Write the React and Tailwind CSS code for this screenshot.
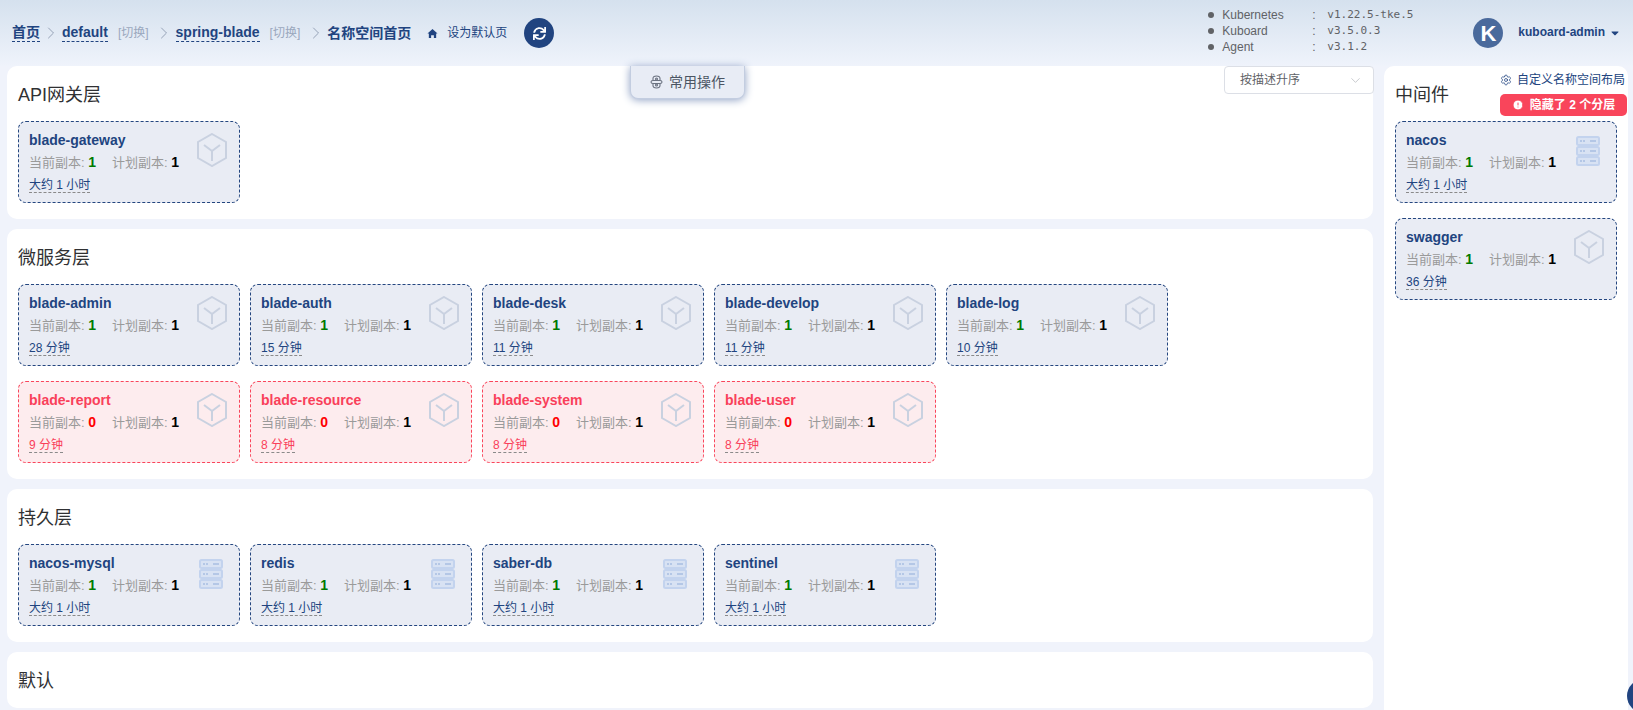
import React from 'react';
import { ChevronRight, ChevronDown, CircleAlert, Settings } from 'lucide-react';
import { FaSync, FaCaretDown } from 'react-icons/fa';

const FONT = "font-['Liberation_Sans','Noto_Sans_CJK_SC',sans-serif]";

const CubeIcon = () => (
  <svg width="30" height="34" viewBox="0 0 30 34" fill="none" stroke="#c9d1e0" strokeWidth="2" className="mt-[11px] shrink-0">
    <path d="M15 1 29 9v16l-14 8-14-8V9z" />
    <path d="M7 12l8 6 8-6M15 18v10" />
  </svg>
);

const ServerIcon = () => (
  <svg width="24" height="30" viewBox="0 0 24 30" className="mt-[14px] mr-[4px] shrink-0">
    {[0, 10, 20].map((y) => (
      <g key={y}>
        <rect x="1" y={y + 1} width="22" height="8" rx="1.5" fill="#d8e2f3" stroke="#c3d3ee" strokeWidth="2" />
        <rect x="14" y={y + 4} width="6" height="2" fill="#b4c7e6" />
        <rect x="4" y={y + 4} width="2" height="2" fill="#b4c7e6" />
        <rect x="7" y={y + 4} width="2" height="2" fill="#b4c7e6" />
      </g>
    ))}
  </svg>
);

const OpsIcon = () => (
  <svg width="13" height="14" viewBox="0 0 13 14" fill="none" stroke="#6b7280" strokeWidth="1.1">
    <path d="M3 5.5V3.5C3 2 4.5 1 6.500 1S10 2 10 3.500V5.500" />
    <path d="M3 8.500V10.500C3 12 4.500 13 6.500 13S10 12 10 10.500V8.500" />
    <path d="M1 7c0-1 1-1.500 2-1.500h7c1 0 2 .5 2 1.500s-1 1.500-2 1.500H3C2 8.500 1 8 1 7z" />
    <circle cx="6.500" cy="4" r="1" />
    <circle cx="6.500" cy="10" r="1" />
  </svg>
);

const HomeIcon = () => (
  <svg width="11" height="11" viewBox="0 0 12 12" fill="#214480" className="ml-[16px] shrink-0">
    <path d="M6 1 11.500 6H10v5H7.500V8h-3v3H2V6H.5z" />
  </svg>
);

const WorkloadCard = ({ name, current = 1, time, icon = 'cube', failed }) => (
  <div
    className={`flex justify-between w-[222px] h-[82px] rounded-[8px] border border-dashed pl-[10px] pr-[12px] ${
      failed ? 'bg-[#fdecee] border-[#f9455b]' : 'bg-[#e9ecf4] border-[#24467f]'
    }`}
  >
    <div className="min-w-0">
      <div className={`mt-[9px] h-[18px] leading-[18px] text-[14px] font-bold ${failed ? 'text-[#f9405a]' : 'text-[#214480]'}`}>
        {name}
      </div>
      <div className="mt-[3px] h-[20px] leading-[20px] text-[13px] text-[#9a9a9a] whitespace-nowrap">
        当前副本:{' '}
        <span className={`font-bold text-[14px] ${current === 0 ? 'text-[#ff0000]' : 'text-[#007a00]'}`}>{current}</span>
        <span className="ml-[16px]">计划副本: </span>
        <span className="font-bold text-[14px] text-black">1</span>
      </div>
      <div className="mt-[3px] flex">
        <span
          className={`h-[18px] leading-[20px] text-[12px] border-b border-dashed border-[#8a8a8a] ${
            failed ? 'text-[#f9405a]' : 'text-[#214480]'
          }`}
        >
          {time}
        </span>
      </div>
    </div>
    {icon === 'cube' ? <CubeIcon /> : <ServerIcon />}
  </div>
);

const Crumb = ({ children }) => (
  <span className="font-bold text-[14px] text-[#214480] border-b border-dashed border-[#214480] leading-[17px]">{children}</span>
);

const Switch = () => <span className="ml-[10px] text-[12px] text-[#9aa7bd]">[切换]</span>;

const Sep = ({ className }) => <ChevronRight size={20} strokeWidth={1.1} className={`text-[#8d9ab0] shrink-0 ${className}`} />;

const Panel = ({ title, children }) => (
  <div className="bg-white rounded-[10px] pl-[11px] pb-[16px]">
    <div className="h-[55px] leading-[58px] text-[18px] text-[#303133]">{title}</div>
    {children}
  </div>
);

const versions = [
  ['Kubernetes', 'v1.22.5-tke.5'],
  ['Kuboard', 'v3.5.0.3'],
  ['Agent', 'v3.1.2'],
];

const App = () => {
  return (
    <div className={`${FONT} h-[710px] overflow-hidden bg-[#f0f3fb]`}>
      <header className="h-[66px] flex items-center bg-gradient-to-b from-[#d5e1ee] to-[#eff3fb] pl-[12px]">
        <div className="flex items-center h-[66px]">
          <Crumb>首页</Crumb>
          <Sep className="mx-[1px]" />
          <Crumb>default</Crumb>
          <Switch />
          <Sep className="ml-[5px] mr-[2px]" />
          <Crumb>spring-blade</Crumb>
          <Switch />
          <Sep className="ml-[6px] mr-[1px]" />
          <span className="font-bold text-[14px] text-[#214480]">名称空间首页</span>
          <HomeIcon />
          <span className="ml-[9px] text-[12px] text-[#214480]">设为默认页</span>
          <span className="ml-[17px] w-[30px] h-[30px] rounded-full bg-[#214480] flex items-center justify-center text-white">
            <FaSync size={13} />
          </span>
        </div>
        <div className="ml-auto flex items-center">
          <div className="text-[12px] text-[#606266] leading-[16px] -mt-[4px]">
            {versions.map(([label, value]) => (
              <div key={label} className="flex items-center h-[16px]">
                <span className="w-[6px] h-[6px] rounded-full bg-[#606266]" />
                <span className="ml-[8px] w-[90px]">{label}</span>
                <span className="w-[15px]">:</span>
                <span className="font-['DejaVu_Sans_Mono',monospace] text-[11px] w-[100px]">{value}</span>
              </div>
            ))}
          </div>
          <div className="ml-[46px] w-[30px] h-[30px] rounded-full bg-[#4a6a9c] flex items-center justify-center text-white font-bold text-[22px]">
            K
          </div>
          <span className="ml-[15px] -mt-[2px] text-[12px] font-bold text-[#214480]">kuboard-admin</span>
          <FaCaretDown size={12} className="ml-[4px] mr-[12px] text-[#214480]" />
        </div>
      </header>

      <div className="relative flex items-start pl-[7px] gap-[11px]">
        {/* 常用操作 sits over the top panel */}
        <div className="absolute left-[630px] top-0 w-[115px] h-[33px] rounded-b-[8px] bg-[#e8ecf5] border border-t-0 border-[#c3cde0] shadow-[0_1px_8px_#8ea0c4] flex items-center justify-center gap-[6px] text-[14px] text-[#4b5563]">
          <OpsIcon />
          常用操作
        </div>
        {/* 按描述升序 */}
        <div className="absolute left-[1224px] top-0 w-[150px] h-[28px] rounded-[4px] bg-white border border-[#dcdfe6] flex items-center justify-between pl-[15px] pr-[10px] text-[12px] text-[#606266]">
          按描述升序
          <ChevronDown size={15} strokeWidth={1} className="text-[#a8abb2]" />
        </div>

        <div className="w-[1366px] flex flex-col gap-[10px] shrink-0">
          <Panel title="API网关层">
            <WorkloadCard name="blade-gateway" time="大约 1 小时" />
          </Panel>
          <Panel title="微服务层">
            <div className="flex flex-col gap-[15px]">
              <div className="flex gap-[10px]">
                <WorkloadCard name="blade-admin" time="28 分钟" />
                <WorkloadCard name="blade-auth" time="15 分钟" />
                <WorkloadCard name="blade-desk" time="11 分钟" />
                <WorkloadCard name="blade-develop" time="11 分钟" />
                <WorkloadCard name="blade-log" time="10 分钟" />
              </div>
              <div className="flex gap-[10px]">
                <WorkloadCard name="blade-report" current={0} time="9 分钟" failed />
                <WorkloadCard name="blade-resource" current={0} time="8 分钟" failed />
                <WorkloadCard name="blade-system" current={0} time="8 分钟" failed />
                <WorkloadCard name="blade-user" current={0} time="8 分钟" failed />
              </div>
            </div>
          </Panel>
          <Panel title="持久层">
            <div className="flex gap-[10px]">
              <WorkloadCard name="nacos-mysql" time="大约 1 小时" icon="server" />
              <WorkloadCard name="redis" time="大约 1 小时" icon="server" />
              <WorkloadCard name="saber-db" time="大约 1 小时" icon="server" />
              <WorkloadCard name="sentinel" time="大约 1 小时" icon="server" />
            </div>
          </Panel>
          <div className="bg-white rounded-[10px] pl-[11px] h-[56px] leading-[58px] text-[18px] text-[#303133]">默认</div>
        </div>

        <div className="w-[244px] h-[644px] bg-white rounded-t-[10px] pl-[11px] shrink-0">
          <div className="flex justify-between h-[55px]">
            <div className="leading-[58px] text-[18px] text-[#303133]">中间件</div>
            <div className="flex flex-col items-end pt-[6px] mr-[1px]">
              <div className="h-[16px] flex items-center gap-[5px] text-[12px] text-[#214480] mr-[2px] whitespace-nowrap">
                <Settings size={12} strokeWidth={1.5} />
                自定义名称空间布局
              </div>
              <div className="mt-[6px] w-[127px] h-[22px] rounded-[5px] bg-[#f9455b] flex items-center justify-center gap-[6px] text-white text-[12px] font-bold whitespace-nowrap">
                <CircleAlert size={12} fill="white" stroke="#f9455b" strokeWidth={2} />
                隐藏了 2 个分层
              </div>
            </div>
          </div>
          <div className="flex flex-col gap-[15px]">
            <WorkloadCard name="nacos" time="大约 1 小时" icon="server" />
            <WorkloadCard name="swagger" time="36 分钟" />
          </div>
        </div>

        {/* 右下角悬浮按钮 */}
        <div className="absolute left-[1627px] top-[613px] w-[34px] h-[34px] rounded-full bg-[#214480]" />
      </div>
    </div>
  );
};

export default App;
